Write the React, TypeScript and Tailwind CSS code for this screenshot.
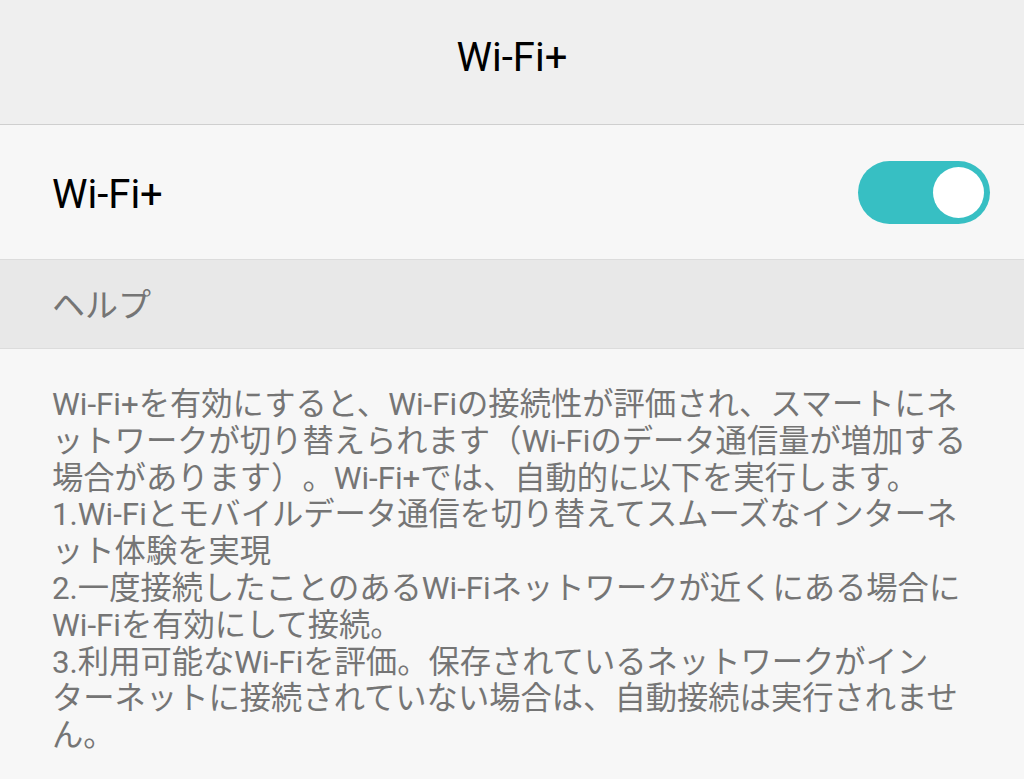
import React from 'react';

// Visual lines of the help text, broken where the reference breaks them.
const helpLines = [
    'Wi-Fi+を有効にすると、Wi-Fiの接続性が評価され、スマートにネ',
    'ットワークが切り替えられます（Wi-Fiのデータ通信量が増加する',
    '場合があります）。Wi-Fi+では、自動的に以下を実行します。',
    '1.Wi-Fiとモバイルデータ通信を切り替えてスムーズなインターネ',
    'ット体験を実現',
    '2.一度接続したことのあるWi-Fiネットワークが近くにある場合に',
    'Wi-Fiを有効にして接続。',
    '3.利用可能なWi-Fiを評価。保存されているネットワークがイン',
    'ターネットに接続されていない場合は、自動接続は実行されませ',
    'ん。'
];

const Toggle: React.FC<{ on: boolean; onChange: () => void }> = ({ on, onChange }) => (
    <button
        onClick={onChange}
        aria-label="Wi-Fi+"
        className={`w-[132px] h-[63px] rounded-full flex items-center px-[6px] ${on ? 'bg-[#37bfc3] justify-end' : 'bg-[#bdbdbd] justify-start'}`}
    >
        <span className="block w-[51px] h-[51px] rounded-full bg-white"></span>
    </button>
);

export default function App() {
    const [enabled, setEnabled] = React.useState(true);

    return (
        <div className="w-[1024px] h-[779px] overflow-hidden bg-[#f7f7f7] font-['Roboto','Noto_Sans_CJK_JP',sans-serif]">
            <header className="h-[125px] bg-[#efefef] border-b border-[#cfcfcf] flex items-center justify-center">
                <h1 className="text-[40px] text-black leading-none -mt-[8px]">Wi-Fi+</h1>
            </header>
            <div className="h-[135px] bg-[#f7f7f7] border-b border-[#dcdcdc] flex items-center justify-between pl-[52px] pr-[34px]">
                <span className="text-[40px] text-black leading-none mt-[5px]">Wi-Fi+</span>
                <Toggle on={enabled} onChange={() => setEnabled(v => !v)} />
            </div>
            <div className="h-[89px] bg-[#e8e8e8] border-b border-[#dcdcdc] flex items-center pl-[52px]">
                <span className="text-[33px] text-[#757575] leading-none font-['Noto_Sans_CJK_JP',sans-serif] -mt-[2px]">ヘルプ</span>
            </div>
            <div className="pt-[38px] pl-[52px] text-[31.3px] leading-[36.8px] text-[#757575] [text-spacing-trim:space-all]">
                {helpLines.map((line, i) => (
                    <div key={i} className="whitespace-nowrap">{line}</div>
                ))}
            </div>
        </div>
    );
}
